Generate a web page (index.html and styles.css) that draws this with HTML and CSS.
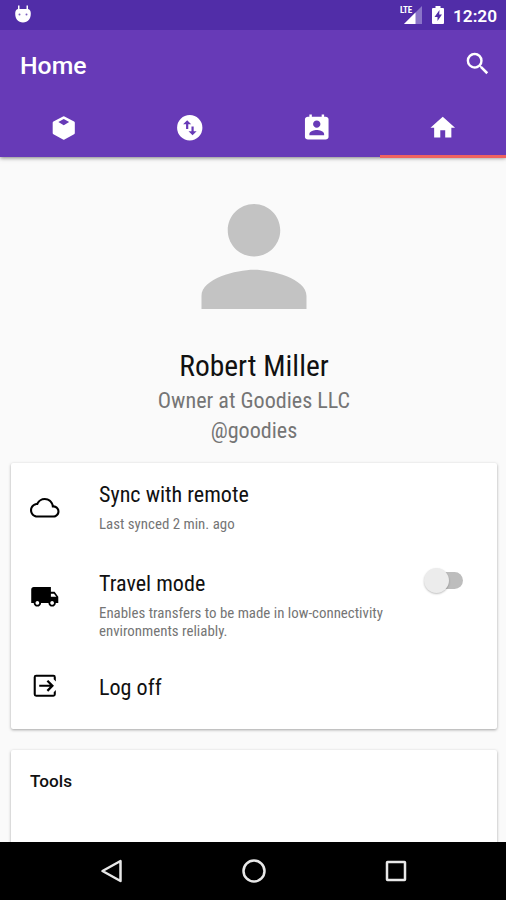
FILE: index.html
```html
<!DOCTYPE html>
<html lang="en">
<head>
<meta charset="utf-8">
<title>Home</title>
<link rel="stylesheet" href="styles.css">
</head>
<body>
<div class="screen">
  <header class="header">
    <div class="status">
      <svg class="droid" viewBox="0 0 18 20"><path fill="#fff" d="M4 1.500h1.500V5h7V1.500H14V5q2.800.5 2.800 4.500C16.800 15 14 18.500 9 18.500S1.200 15 1.200 9.500Q1.200 5.500 4 5z"/><circle cx="5.500" cy="10.500" r="1" fill="#7b5fc0"/><circle cx="12.500" cy="10.500" r="1" fill="#7b5fc0"/></svg>
      <div class="status-right">
        <svg class="signal" viewBox="0 0 22 20"><path fill="#8a74c8" d="M22 1v18H4z"/><path fill="#fff" d="M15.500 7.500V19H4z"/><text x="0" y="8" class="lte">LTE</text></svg>
        <svg class="battery" viewBox="0 0 12 18"><path fill="#fff" d="M3.500 0h5v2H11q1 0 1 1v14q0 1-1 1H1q-1 0-1-1V3q0-1 1-1h2.500z"/><path fill="#512da8" d="M7.500 4L2.500 11h3v4l4.500-6.500H7.200z"/></svg>
        <span class="time">12:20</span>
      </div>
    </div>
    <div class="toolbar">
      <h1 class="title">Home</h1>
      <svg class="icon" viewBox="0 0 24 24"><path d="M15.500 14h-.79l-.28-.27A6.471 6.471 0 0 0 16 9.500 6.500 6.500 0 1 0 9.500 16c1.610 0 3.090-.59 4.230-1.570l.27.28v.79l5 4.990L20.490 19l-4.990-5zm-6 0C7.010 14 5 11.990 5 9.500S7.010 5 9.500 5 14 7.010 14 9.500 11.990 14 9.500 14z"/></svg>
    </div>
    <nav class="tabs">
      <div class="tab"><svg class="icon" viewBox="0 0 24 24"><path fill-rule="evenodd" d="M12 2.600q.3 0 .6.200l7.800 4.200q.6.300.6 1v8.300q0 .7-.6 1l-7.800 4.300q-.6.300-1.200 0l-7.800-4.300q-.6-.3-.6-1V8q0-.7.6-1l7.800-4.200q.3-.2.600-.2zM12 4.900L7.600 7.400 12 9.900l4.400-2.500z"/></svg></div>
      <div class="tab"><svg class="icon" viewBox="0 0 24 24"><path fill-rule="evenodd" d="M12 1.700a10.300 10.300 0 1 0 0 20.600 10.300 10.300 0 0 0 0-20.600zM6.600 9.100L9.900 5.800 13.200 9.100H10.800v4H9V9.100H6.600zM17.600 14.900L14.300 18.200 11 14.900H13.400v-4h1.800v4h2.400z"/></svg></div>
      <div class="tab"><svg class="icon" viewBox="0 0 24 24"><path d="M19.200 3h-1.200V1.300h-2V3H8V1.300H6V3H4.800C3.500 3 2.400 3.900 2.400 5v14.500c0 1.100 1.100 2 2.400 2h14.400c1.300 0 2.400-.9 2.400-2V5c0-1.100-1.100-2-2.400-2zm-7.200 3c1.660 0 3 1.340 3 3s-1.340 3-3 3-3-1.340-3-3 1.340-3 3-3zm6 12H6v-1c0-2 4-3.100 6-3.100s6 1.100 6 3.100v1z"/></svg></div>
      <div class="tab tab-active"><svg class="icon" viewBox="0 0 24 24"><path d="M10 20v-6h4v6h5v-8h3L12 3 2 12h3v8z"/></svg></div>
    </nav>
  </header>
  <main class="content">
    <section class="profile">
      <svg class="avatar" viewBox="4 4 16 16"><path d="M12 12c2.210 0 4-1.790 4-4s-1.790-4-4-4-4 1.790-4 4 1.790 4 4 4zm0 2c-2.670 0-8 1.340-8 4v2h16v-2c0-2.660-5.330-4-8-4z"/></svg>
      <div class="name">Robert Miller</div>
      <div class="role">Owner at Goodies LLC</div>
      <div class="role">@goodies</div>
    </section>
    <section class="card">
      <div class="row row-sync">
        <svg class="icon" viewBox="0 0 24 24"><path d="M19.350 10.040C18.670 6.590 15.640 4 12 4 9.110 4 6.600 5.640 5.350 8.040 2.340 8.360 0 10.910 0 14c0 3.310 2.690 6 6 6h13c2.760 0 5-2.240 5-5 0-2.640-2.050-4.780-4.650-4.960zM19 18.300H6c-2.350 0-4.300-1.930-4.300-4.300s1.950-4.300 4.300-4.300h.5C7.200 7.300 9.400 5.700 12 5.700c3.200 0 5.800 2.600 5.800 5.800v.2H19c1.800 0 3.300 1.480 3.300 3.300s-1.500 3.300-3.300 3.300z"/></svg>
        <div class="text"><div class="label">Sync with remote</div><div class="hint">Last synced 2 min. ago</div></div>
      </div>
      <div class="row row-travel">
        <svg class="icon" viewBox="0 0 24 24"><path d="M20 8h-3V4H3c-1.100 0-2 .9-2 2v11h2c0 1.660 1.340 3 3 3s3-1.340 3-3h6c0 1.660 1.340 3 3 3s3-1.340 3-3h2v-5l-3-4zM6 18.500c-.83 0-1.500-.67-1.500-1.500s.67-1.500 1.500-1.500 1.500.67 1.500 1.500-.67 1.500-1.500 1.500zm13.500-9l1.960 2.500H17V9.500h2.500zm-1.500 9c-.83 0-1.500-.67-1.500-1.500s.67-1.500 1.500-1.500 1.500.67 1.500 1.500-.67 1.500-1.500 1.500z"/></svg>
        <div class="text"><div class="label">Travel mode</div><div class="hint">Enables transfers to be made in low-connectivity<br>environments reliably.</div></div>
        <div class="switch"><div class="thumb"></div></div>
      </div>
      <div class="row row-logoff">
        <svg class="icon" viewBox="0 0 24 24"><path d="M21 8.500V5a2 2 0 0 0-2-2H5a2 2 0 0 0-2 2v14a2 2 0 0 0 2 2h14a2 2 0 0 0 2-2v-3.500l-1.700 1.700v2.100H4.700V4.700h14.600v2.100zM14.800 7.300l-1.300 1.300 2.600 2.600H7.500V12.900h8.600l-2.600 2.600 1.300 1.300 4.700-4.750z"/></svg>
        <div class="text"><div class="label">Log off</div></div>
      </div>
    </section>
    <section class="card card-tools"><h2 class="heading">Tools</h2></section>
  </main>
  <footer class="navbar">
    <svg class="nav-icon" viewBox="0 0 24 24"><path d="M20.500 2v20L2.500 12z"/></svg>
    <svg class="nav-icon" viewBox="0 0 24 24"><circle cx="12" cy="12" r="10.500"/></svg>
    <svg class="nav-icon" viewBox="0 0 24 24"><rect x="3" y="3" width="18" height="18" rx=".5"/></svg>
  </footer>
</div>
</body>
</html>
```
FILE: styles.css
```css
* { box-sizing: border-box; }
body { margin: 0; font-family: Roboto, "Liberation Sans", sans-serif; color: #111; }
.screen { width: 506px; height: 900px; display: flex; flex-direction: column; overflow: hidden; background: #fafafa; }
.header { height: 157px; flex: none; background: #673ab7; box-shadow: 0 1px 4px rgba(0,0,0,.5); z-index: 1; }
.status { height: 30px; background: #512da8; display: flex; justify-content: space-between; padding: 0 9px 0 14px; }
.droid { width: 18px; height: 20px; margin-top: 4px; }
.status-right { display: flex; align-items: flex-start; }
.signal { width: 22px; height: 20px; margin: 5px 10px 0 0; }
.lte { font: bold 9px Roboto, sans-serif; font-stretch: 75%; letter-spacing: -.3px; fill: #fff; }
.battery { width: 12px; height: 18px; margin: 6px 9px 0 0; }
.time { font-size: 17.200px; line-height: 32px; font-weight: 600; color: #fff; }
.toolbar { height: 69px; display: flex; align-items: center; justify-content: space-between; padding: 0 14px 2px 20px; }
.title { margin: 3px 0 0; font-size: 24.800px; font-weight: 550; color: #fff; }
.icon { width: 29.500px; height: 29.500px; flex: none; display: block; }
.header .icon { fill: #fff; }
.tabs { height: 59px; display: flex; }
.tab { flex: 1; display: flex; align-items: center; justify-content: center; padding-bottom: 1px; }
.tab-active { border-bottom: 3px solid #f0625f; padding: 2px 0 0; }
.content { flex: 1; min-height: 0; overflow: hidden; padding: 47px 9px 0 11px; }
.profile { height: 259px; display: flex; flex-direction: column; align-items: center; }
.avatar { width: 106px; height: 105px; fill: #c3c3c3; margin-bottom: 40px; }
.name, .role, .label, .hint { font-family: "Roboto Condensed", Roboto, sans-serif; font-stretch: 75%; white-space: nowrap; }
.name { font-size: 29.500px; line-height: 35px; margin-bottom: 1px; color: #111; }
.role { font-size: 22.100px; line-height: 30px; color: #757575; }
.card { height: 266px; background: #fff; border-radius: 2px; box-shadow: 0 1px 3px rgba(0,0,0,.35); padding-left: 19px; }
.row { display: flex; align-items: center; }
.row-sync { height: 90px; }
.row-travel { height: 87px; }
.row-logoff { height: 91px; }
.text { margin-left: 39.500px; }
.label { font-size: 22.100px; line-height: 30px; }
.hint { font-size: 14.900px; line-height: 18px; color: #757575; }
.row-sync .text { margin-top: -4px; }
.row-sync .hint { margin-top: 6px; }
.row-travel .text { margin-top: 14px; }
.row-travel .hint { margin-top: 6px; }
.row-logoff .text { margin-top: 2px; }
.switch { width: 32px; height: 17px; margin: -32px 34px 0 auto; border-radius: 9px; background: #bdbdbd; }
.thumb { width: 25px; height: 25px; margin: -4px 0 0 -7px; border-radius: 50%; background: #ececec; box-shadow: 0 1px 2px rgba(0,0,0,.25); }
.card-tools { margin-top: 21px; padding-top: 21px; height: 120px; }
.heading { margin: 0; font-size: 17.200px; line-height: 20px; font-weight: 500; }
.navbar { height: 58px; flex: none; z-index: 1; background: #000; display: flex; justify-content: center; align-items: center; gap: 118px; padding-left: 1px; }
.nav-icon { width: 24px; height: 24px; fill: none; stroke: #e8e8e8; stroke-width: 2.500; stroke-linejoin: round; }
```
